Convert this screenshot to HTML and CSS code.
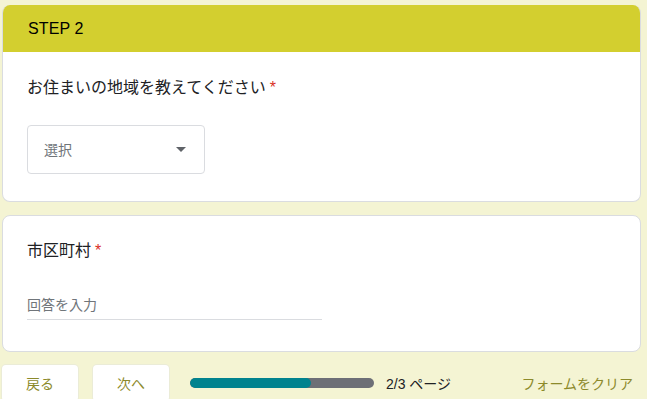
FILE: index.html
```html
<!DOCTYPE html>
<html lang="ja">
<head>
<meta charset="utf-8">
<title>STEP 2</title>
<link rel="stylesheet" href="styles.css">
</head>
<body>
<main class="form">
  <section class="card card-first">
    <div class="card-header">STEP 2</div>
    <div class="card-body body-select">
      <div class="question">お住まいの地域を教えてください<span class="req">*</span></div>
      <div class="select">
        <span class="select-label">選択</span>
        <svg class="select-arrow" width="10" height="5" viewBox="0 0 10 5"><path d="M0 0h10L5 5z" fill="#5f6368"/></svg>
      </div>
    </div>
  </section>
  <section class="card">
    <div class="card-body body-text">
      <div class="question">市区町村<span class="req">*</span></div>
      <div class="text-input">回答を入力</div>
    </div>
  </section>
  <nav class="footer">
    <div class="nav-buttons">
      <button class="btn">戻る</button>
      <button class="btn">次へ</button>
    </div>
    <div class="progress"><div class="progress-fill" style="width:66%"></div></div>
    <span class="page-count">2/3 ページ</span>
    <button class="clear">フォームをクリア</button>
  </nav>
</main>
</body>
</html>
```
FILE: styles.css
```css
* { box-sizing: border-box; }
html, body { margin: 0; padding: 0; }
body {
  background: #f4f4d3;
  font-family: "Liberation Sans", "Noto Sans CJK JP", sans-serif;
  color: #202124;
  overflow: hidden;
  height: 399px;
}
.form {
  width: 639px;
  margin-left: 2px;
  padding-top: 5px;
  display: flex;
  flex-direction: column;
  gap: 13px;
}
.card {
  background: #fff;
  border: 1px solid #dadce0;
  border-radius: 8px;
  overflow: hidden;
}
.card-first { border-top: none; }
.card-header {
  background: #d3cf2f;
  height: 47px;
  display: flex;
  align-items: center;
  padding-left: 25px;
  font-size: 16px;
  color: #000;
  letter-spacing: 0.1px;
}
.card-body { padding: 0 24px 0 24px; }
.body-select { padding-top: 24px; padding-bottom: 27px; }
.body-text { padding-top: 23px; padding-bottom: 31px; }
.question {
  font-size: 16px;
  line-height: 24px;
  height: 24px;
  color: #202124;
}
.req {
  color: #d93025;
  padding-left: 4px;
}
.select {
  margin-top: 25px;
  width: 178px;
  height: 49px;
  border: 1px solid #dadce0;
  border-radius: 4px;
  display: flex;
  align-items: center;
  justify-content: space-between;
  padding: 0 18px 1px 16px;
}
.select-label {
  font-size: 14px;
  color: #70757a;
}
.select-arrow { display: block; margin-top: 1px; }
.text-input {
  margin-top: 32px;
  width: 295px;
  font-size: 14px;
  line-height: 20px;
  color: #70757a;
  padding-bottom: 4px;
  border-bottom: 1px solid #dadce0;
}
.footer {
  display: flex;
  align-items: center;
  height: 36px;
}
.nav-buttons {
  display: flex;
  gap: 15px;
}
.btn {
  width: 76px;
  height: 36px;
  background: #fff;
  border: none;
  border-radius: 4px;
  font-family: "Liberation Sans", "Noto Sans CJK JP", sans-serif;
  font-size: 14px;
  color: #8c8a2b;
  padding: 0;
  box-shadow: 0 0 0 1px rgba(218, 220, 224, 0.35);
}
.progress {
  margin-left: 21px;
  width: 184px;
  height: 10px;
  border-radius: 5px;
  background: #6d6f76;
  overflow: hidden;
}
.progress-fill {
  height: 100%;
  background: #00838e;
  border-radius: 5px;
}
.page-count {
  margin-left: 12px;
  font-size: 14px;
  color: #202124;
}
.clear {
  margin-left: auto;
  background: none;
  border: none;
  padding: 0 8px;
  height: 36px;
  font-family: "Liberation Sans", "Noto Sans CJK JP", sans-serif;
  font-size: 14px;
  color: #8c8a2b;
}
```
